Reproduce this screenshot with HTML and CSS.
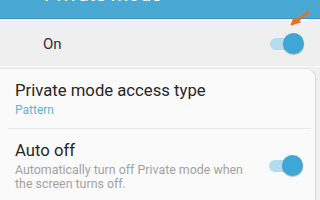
FILE: index.html
```html
<!DOCTYPE html>
<html>
<head>
<meta charset="utf-8">
<link rel="stylesheet" href="styles.css">
</head>
<body>
<div class="screen">
  <header class="appbar">
    <span class="back">&#8592;</span>
    <span class="title">Private mode</span>
  </header>
  <div class="master">
    <span class="master-label">On</span>
    <span class="toggle"><span class="track"></span><span class="thumb"></span></span>
  </div>
  <div class="card">
    <div class="item item-first">
      <div class="item-text">
        <div class="item-title">Private mode access type</div>
        <div class="item-value">Pattern</div>
      </div>
    </div>
    <div class="divider"></div>
    <div class="item item-second">
      <div class="item-text">
        <div class="item-title">Auto off</div>
        <div class="item-sub">Automatically turn off Private mode when<br>the screen turns off.</div>
      </div>
      <span class="toggle"><span class="track"></span><span class="thumb"></span></span>
    </div>
  </div>
  <svg class="pointer" width="24" height="20" viewBox="0 0 24 20">
    <path d="M20 3 L9 12" stroke="#f26a1b" stroke-width="2.6" stroke-linecap="round" fill="none"/>
    <path d="M3 16 L6 8.5 L12.5 13 Z" fill="#f26a1b" stroke="#f26a1b" stroke-width="1" stroke-linejoin="round"/>
  </svg>
</div>
</body>
</html>
```
FILE: styles.css
```css
html, body {
  margin: 0;
  padding: 0;
}
body {
  width: 320px;
  height: 200px;
  overflow: hidden;
  background: #f0f0f0;
  font-family: Roboto, "Liberation Sans", sans-serif;
}
.screen {
  position: relative;
  width: 320px;
  height: 200px;
  overflow: hidden;
}
.appbar {
  height: 18px;
  background: #4aa9d3;
  border-bottom: 1px solid #3f97c0;
  display: flex;
  align-items: flex-end;
  color: #fff;
  overflow: hidden;
}
.back {
  font-size: 18px;
  line-height: 18px;
  margin-left: 14px;
  margin-bottom: 16px;
  width: 28px;
}
.title {
  font-size: 20px;
  line-height: 20px;
  margin-bottom: 14px;
  margin-left: 2px;
}
.master {
  margin-top: 1px;
  height: 45px;
  background: #efefef;
  border-top: 1px solid #fbf7f7;
  border-bottom: 1px solid #f8f8f8;
  display: flex;
  align-items: center;
  justify-content: space-between;
  padding: 0 16px 0 43px;
}
.master-label {
  font-size: 15px;
  color: #303030;
}
.toggle {
  position: relative;
  width: 34px;
  height: 22px;
  flex: none;
}
.track {
  position: absolute;
  left: 0;
  top: 5px;
  width: 30px;
  height: 12px;
  border-radius: 6px;
  background: #b4dbee;
}
.thumb {
  position: absolute;
  right: 0;
  top: 0;
  width: 21px;
  height: 21px;
  border-radius: 50%;
  background: #3fa7d6;
  box-shadow: 0 1px 1px rgba(0,0,0,0.25);
}
.card {
  margin-top: 1px;
  width: 316px;
  height: 140px;
  background: #fafafa;
  border-top: 1px solid #e6e6e6;
  border-right: 1px solid #d4d4d4;
  border-top-right-radius: 10px;
  box-sizing: border-box;
}
.item {
  display: flex;
  align-items: center;
  justify-content: space-between;
  padding: 0 12px 0 15px;
}
.item-first {
  box-sizing: border-box;
  height: 59px;
  align-items: flex-start;
  padding-top: 12.3px;
}
.item-second {
  padding-top: 12.3px;
}
.item-title {
  font-size: 16.7px;
  line-height: 20px;
  color: #262626;
}
.item-value {
  font-size: 12px;
  line-height: 15px;
  color: #5cb3d9;
  margin-top: 2px;
}
.item-sub {
  font-size: 12.4px;
  line-height: 13.5px;
  color: #a2a2a2;
  margin-top: 2px;
}
.divider {
  height: 1px;
  background: #e8e8e8;
  margin: 0 4px 0 8px;
}
.pointer {
  position: absolute;
  left: 288px;
  top: 9px;
}
```
